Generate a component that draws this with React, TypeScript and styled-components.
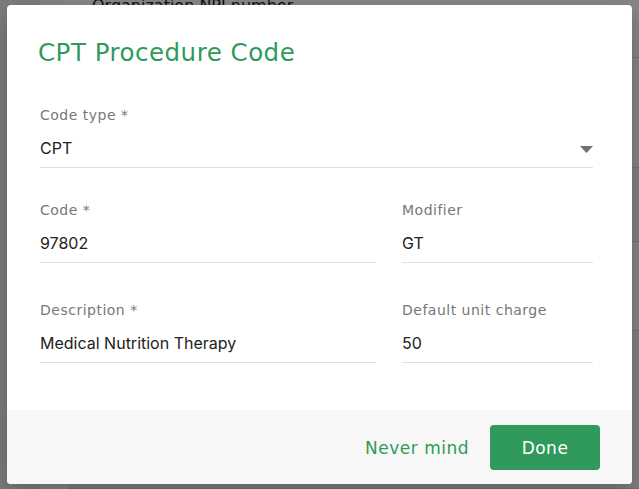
import styled, { createGlobalStyle } from "styled-components";

const green = "#2f9a5c";
const heading = `"DejaVu Sans", "Open Sans", sans-serif`;
const body = `Inter, Roboto, "Liberation Sans", sans-serif`;

const GlobalStyle = createGlobalStyle`
  html, body {
    margin: 0;
    padding: 0;
    height: 100%;
  }
  body {
    font-family: ${body};
    overflow: hidden;
  }
`;

// --- the page underneath the dialog ---

const Screen = styled.div`
  position: relative;
  width: 100vw;
  height: 100vh;
  overflow: hidden;
  display: flex;
  background: #fff;
`;

const SideRail = styled.div`
  width: 40px;
  background: #ececec;
`;

const NavRail = styled.div`
  width: 28px;
  background: #fbfbfb;
`;

const Main = styled.div`
  flex: 1;
  display: flex;
  flex-direction: column;
`;

const PageRow = styled.div<{ $h: number; $shade?: boolean }>`
  height: ${(p) => p.$h}px;
  border-bottom: 1px solid #dcdcdc;
  background: ${(p) => (p.$shade ? "#f1f1f1" : "#ffffff")};
  padding-left: 24px;
  font-family: ${heading};
  font-size: 16px;
  color: #222;
  line-height: 12px;
`;

const Backdrop = styled.div`
  position: absolute;
  inset: 0;
  background: rgba(0, 0, 0, 0.47);
  display: flex;
  align-items: flex-start;
  padding: 5px 0 0 7px;
`;

// --- dialog ---

const Dialog = styled.div`
  width: 625px;
  height: 479px;
  background: #fff;
  border-radius: 4px;
  overflow: hidden;
  display: flex;
  flex-direction: column;
  box-shadow: 0 8px 24px rgba(0, 0, 0, 0.25);
`;

const DialogBody = styled.div`
  flex: 1;
  padding: 32px 39px 0 33px;
`;

const Title = styled.h2`
  margin: 0 0 36px -2px;
  font-family: ${heading};
  font-weight: 400;
  font-size: 24.5px;
  line-height: 32px;
  letter-spacing: 0.5px;
  color: ${green};
`;

const FieldGrid = styled.div`
  display: grid;
  grid-template-columns: 336px 191px;
  column-gap: 26px;
`;

const Field = styled.div<{ $wide?: boolean; $top?: number }>`
  grid-column: ${(p) => (p.$wide ? "1 / -1" : "auto")};
  margin-top: ${(p) => p.$top ?? 0}px;
  border-bottom: 1px solid #e0e0e0;
  padding-bottom: 7px;
`;

const Label = styled.div`
  font-family: ${heading};
  font-size: 14px;
  line-height: 20px;
  letter-spacing: 0.5px;
  color: #777;
  margin-bottom: 11px;
`;

const ValueRow = styled.div`
  display: flex;
  align-items: center;
  justify-content: space-between;
  font-family: ${body};
  font-size: 16px;
  line-height: 24px;
  color: #222;
`;

const Arrow = styled.svg`
  width: 13px;
  height: 7px;
  margin-top: 2px;
  fill: #707070;
`;

const Footer = styled.div`
  height: 74px;
  background: #f7f7f7;
  display: flex;
  justify-content: flex-end;
  align-items: flex-start;
  gap: 9px;
  padding: 15px 32px 0 0;
  box-sizing: border-box;
`;

const Button = styled.button<{ $primary?: boolean }>`
  height: 45px;
  min-width: ${(p) => (p.$primary ? "110px" : "0")};
  padding: 0 12px;
  border: none;
  border-radius: 4px;
  font-family: ${heading};
  font-size: 17px;
  font-weight: 400;
  letter-spacing: 0.5px;
  cursor: pointer;
  background: ${(p) => (p.$primary ? green : "transparent")};
  color: ${(p) => (p.$primary ? "#fff" : green)};
`;

type FieldProps = {
  label: string;
  value: string;
  wide?: boolean;
  top?: number;
  select?: boolean;
};

function TextField({ label, value, wide, top, select }: FieldProps) {
  return (
    <Field $wide={wide} $top={top}>
      <Label>{label}</Label>
      <ValueRow>
        <span>{value}</span>
        {select && (
          <Arrow viewBox="0 0 13 7">
            <path d="M0 0h13L6.5 7z" />
          </Arrow>
        )}
      </ValueRow>
    </Field>
  );
}

export default function App() {
  return (
    <>
      <GlobalStyle />
      <Screen>
        <SideRail />
        <NavRail />
        <Main>
          <PageRow $h={58}>Organization NPI number</PageRow>
          <PageRow $h={111} />
          <PageRow $h={74} $shade />
          <PageRow $h={90} />
          <PageRow $h={160} $shade />
        </Main>
        <Backdrop>
          <Dialog>
            <DialogBody>
              <Title>CPT Procedure Code</Title>
              <FieldGrid>
                <TextField label="Code type *" value="CPT" wide select />
                <TextField label="Code *" value="97802" top={32} />
                <TextField label="Modifier" value="GT" top={32} />
                <TextField label="Description *" value="Medical Nutrition Therapy" top={37} />
                <TextField label="Default unit charge" value="50" top={37} />
              </FieldGrid>
            </DialogBody>
            <Footer>
              <Button>Never mind</Button>
              <Button $primary>Done</Button>
            </Footer>
          </Dialog>
        </Backdrop>
      </Screen>
    </>
  );
}
